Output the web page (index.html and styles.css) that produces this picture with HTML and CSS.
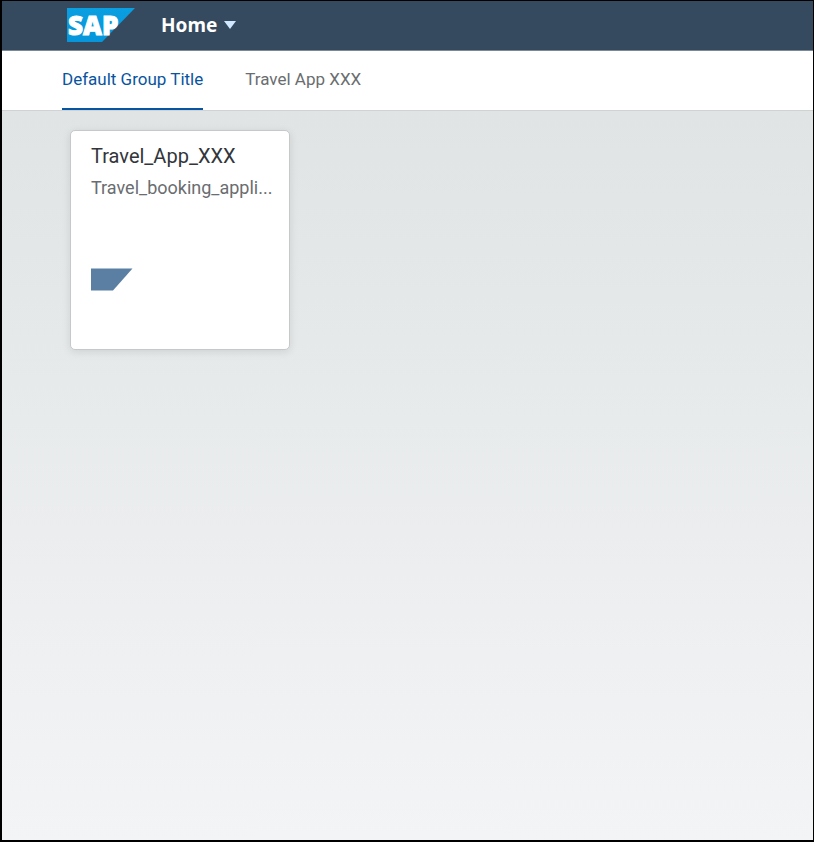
FILE: index.html
```html
<!DOCTYPE html>
<html lang="en">
<head>
<meta charset="utf-8">
<meta name="viewport" content="width=device-width, initial-scale=1">
<title>Home</title>
<link rel="stylesheet" href="styles.css">
</head>
<body>
<header class="shell">
  <a class="logo" href="#">
    <svg width="68" height="34" viewBox="0 0 68 34" role="img">
      <defs>
        <linearGradient id="brand" x1="0" y1="0" x2="0" y2="1">
          <stop offset="0" stop-color="#0a9fe0"/>
          <stop offset="1" stop-color="#0695da"/>
        </linearGradient>
      </defs>
      <path d="M0 0H68L35 34H0Z" fill="url(#brand)"/>
      <text class="logo-text" x="1" y="27">SAP</text>
    </svg>
  </a>
  <button class="title" type="button">Home
    <svg width="14" height="10" viewBox="0 0 14 10" aria-hidden="true"><path d="M1 1H13L7 9Z" fill="#d1e8ff"/></svg>
  </button>
</header>
<nav class="tabs">
  <a class="tab tab-active" href="#">Default Group Title</a>
  <a class="tab" href="#">Travel App XXX</a>
</nav>
<main class="content">
  <a class="tile" href="#">
    <h2 class="tile-title">Travel_App_XXX</h2>
    <p class="tile-subtitle">Travel_booking_appli...</p>
    <svg class="tile-icon" width="42" height="23" viewBox="0 0 42 23" aria-hidden="true"><path d="M0 0.5H41.5L22 22.5H0Z" fill="#5b7fa3"/></svg>
  </a>
</main>
</body>
</html>
```
FILE: styles.css
```css
* {
  box-sizing: border-box;
}

body {
  display: flex;
  flex-direction: column;
  min-height: 100vh;
  margin: 0;
  border: 1px solid #000;
  border-left-width: 2px;
  border-bottom-width: 2px;
  background: #f3f4f5;
  font-family: Roboto, "Liberation Sans", sans-serif;
}

a {
  color: inherit;
  text-decoration: none;
}

.shell {
  display: flex;
  align-items: center;
  gap: 26px;
  height: 50px;
  padding: 0 65px 2px;
  border-bottom: 1px solid #7c8c9b;
  background: #354a5f;
}

.logo,
.logo svg {
  display: block;
}

.logo-text {
  fill: #fff;
  stroke: #fff;
  stroke-width: 1px;
  font: 800 26px "Open Sans", "Noto Sans", sans-serif;
}

.title {
  display: flex;
  align-items: center;
  gap: 6px;
  padding: 0;
  border: 0;
  background: none;
  color: #fff;
  font: 700 19px/24px "Noto Sans", sans-serif;
}

.tabs {
  display: flex;
  gap: 42px;
  height: 60px;
  padding-left: 60px;
  border-bottom: 1px solid #d0d3d4;
  background: #fff;
  box-shadow: 0 1px 3px rgba(0, 0, 0, 0.1);
}

.tab {
  height: 59px;
  padding-top: 16px;
  color: #6a6d70;
  font-size: 17px;
  line-height: 24px;
}

.tab-active {
  border-bottom: 2px solid #0854a0;
  color: #0854a0;
}

.content {
  flex: 1;
  padding: 19px 68px;
  background: linear-gradient(#e0e4e5, #f3f4f5);
}

.tile {
  display: block;
  width: 220px;
  height: 220px;
  padding: 11px 20px;
  border: 1px solid #c5c9ca;
  border-radius: 5px;
  background: #fff;
  box-shadow: 0 2px 8px rgba(0, 0, 0, 0.1);
}

.tile-title {
  margin: 0;
  color: #32363a;
  font-size: 20px;
  font-weight: 400;
  line-height: 28px;
}

.tile-subtitle {
  margin: 6px 0 0;
  color: #6a6d70;
  font-size: 18px;
  line-height: 24px;
}

.tile-icon {
  display: block;
  margin-top: 68px;
}
```
